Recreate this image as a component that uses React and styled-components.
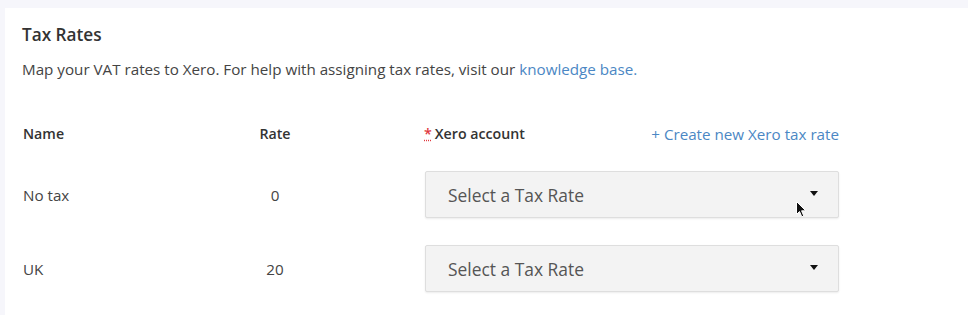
import React from 'react';
import styled, { createGlobalStyle } from 'styled-components';

const GlobalStyle = createGlobalStyle`
  body {
    margin: 0;
    background: #f6f6fb;
    font-family: "Open Sans", "Liberation Sans", sans-serif;
    color: #333;
  }
`;

const Card = styled.section`
  position: relative;
  margin: 8px 0 0 5px;
  min-height: 307px;
  background: #fff;
  padding: 16px 17px 0;
  box-sizing: border-box;
`;

const Title = styled.h2`
  margin: 0;
  font-size: 17.2px;
  line-height: 22px;
  font-weight: 600;
  color: #333;
`;

const Description = styled.p`
  margin: 13px 0 0;
  font-size: 15.2px;
  line-height: 20px;
  color: #444;
`;

const Link = styled.a`
  color: #4b87c4;
  font-weight: 400;
  text-decoration: none;
`;

const Table = styled.div`
  display: grid;
  grid-template-columns: 212px 80px 524px;
  row-gap: 27px;
  align-items: center;
  margin-top: 45px;
  padding-left: 1px;
`;

const HeadCell = styled.div`
  font-size: 14.2px;
  line-height: 20px;
  font-weight: 600;
  color: #333;
  text-align: ${({ $center }) => ($center ? 'center' : 'left')};
`;

const AccountHead = styled.div`
  display: flex;
  justify-content: space-between;
  margin-left: 109px;
  font-size: 15.2px;
  line-height: 20px;
`;

const Required = styled.span`
  font-size: 14.2px;
  font-weight: 600;
  color: #333;

  abbr {
    color: #e0383e;
    text-decoration: underline dotted #e0383e;
    margin-right: 3px;
  }
`;

const Cell = styled.div`
  font-size: 15.2px;
  line-height: 20px;
  color: #444;
  text-align: ${({ $center }) => ($center ? 'center' : 'left')};
`;

const Select = styled.div`
  display: flex;
  align-items: center;
  justify-content: space-between;
  margin-left: 110px;
  height: 47px;
  box-sizing: border-box;
  padding: 0 20px 0 22px;
  background: #f3f3f3;
  border: 1px solid #dedede;
  border-radius: 2px;
  box-shadow: 0 1px 2px rgba(0, 0, 0, 0.08);
  font-size: 17.4px;
  color: #555;
`;

const Caret = styled.span`
  width: 0;
  height: 0;
  border-left: 4px solid transparent;
  border-right: 4px solid transparent;
  border-top: 5px solid #111;
  margin-top: -2px;
`;

const Cursor = styled.svg`
  position: absolute;
  left: 791px;
  top: 193px;
`;

const rows = [
  { name: 'No tax', rate: 0 },
  { name: 'UK', rate: 20 },
];

const App = () => (
  <>
    <GlobalStyle />
    <Card>
      <Title>Tax Rates</Title>
      <Description>
        Map your VAT rates to Xero. For help with assigning tax rates, visit our{' '}
        <Link href="#">knowledge base.</Link>
      </Description>
      <Table>
        <HeadCell>Name</HeadCell>
        <HeadCell $center>Rate</HeadCell>
        <AccountHead>
          <Required>
            <abbr title="required">*</abbr>Xero account
          </Required>
          <Link href="#">+ Create new Xero tax rate</Link>
        </AccountHead>
        {rows.map((row) => (
          <React.Fragment key={row.name}>
            <Cell>{row.name}</Cell>
            <Cell $center>{row.rate}</Cell>
            <Select>
              Select a Tax Rate
              <Caret />
            </Select>
          </React.Fragment>
        ))}
      </Table>
      <Cursor width="11" height="17" viewBox="0 0 11 17">
        <path d="M0.5 0.5 L0.5 13.5 L3.5 10.5 L5.8 15.8 L7.8 15 L5.6 9.8 L9.8 9.8 Z" fill="#111" stroke="#fff" strokeWidth="1" />
      </Cursor>
    </Card>
  </>
);

export default App;
